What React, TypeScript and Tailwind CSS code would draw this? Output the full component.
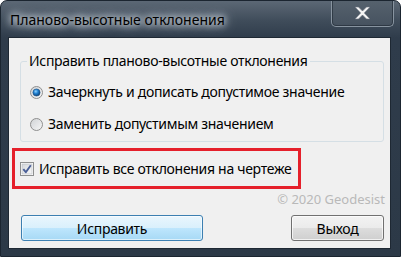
import React from "react";

const font = { fontFamily: '"Noto Sans", "Open Sans", sans-serif' };

function Radio({ checked }: { checked: boolean }) {
  return (
    <svg width="13" height="13" viewBox="0 0 13 13" className="shrink-0">
      <defs>
        <linearGradient id={checked ? "rg1" : "rg0"} x1="0" y1="0" x2="1" y2="1">
          <stop offset="0" stopColor="#cfd2d5" />
          <stop offset="1" stopColor="#f7f7f7" />
        </linearGradient>
        <radialGradient id="dot" cx="0.4" cy="0.35" r="0.7">
          <stop offset="0" stopColor="#8fd2ff" />
          <stop offset="0.45" stopColor="#1f7fcf" />
          <stop offset="1" stopColor="#0b3a6e" />
        </radialGradient>
      </defs>
      <circle cx="6.5" cy="6.5" r="6" fill={`url(#${checked ? "rg1" : "rg0"})`} stroke="#8f8f8f" strokeWidth="1" />
      {checked && <circle cx="6.5" cy="6.5" r="3.6" fill="url(#dot)" stroke="#1c4f82" strokeWidth="0.6" />}
    </svg>
  );
}

function Check() {
  return (
    <svg width="14" height="14" viewBox="0 0 14 14" className="shrink-0">
      <defs>
        <linearGradient id="cb" x1="0" y1="0" x2="1" y2="1">
          <stop offset="0" stopColor="#d3d6da" />
          <stop offset="1" stopColor="#f9f9f9" />
        </linearGradient>
      </defs>
      <rect x="0.5" y="0.5" width="13" height="13" fill="#ffffff" stroke="#8e8f8f" />
      <rect x="2" y="2" width="10" height="10" fill="url(#cb)" stroke="#b5bac0" strokeWidth="0.6" />
      <path d="M3.3 7.2 L5.8 10.2 L10.8 3.2" fill="none" stroke="#4a5f97" strokeWidth="1.9" strokeLinejoin="round" />
    </svg>
  );
}

export default function App() {
  return (
    <div
      className="relative w-[401px] h-[257px] rounded-t-[7px] border border-[#1b2530] bg-[linear-gradient(180deg,#5c6875_0px,#3f4c5a_20px,#2f3c4b_37px,#2c3947_257px)] flex flex-col overflow-hidden"
      style={font}
    >
      {/* title bar */}
      <div className="h-[36px] flex items-start shrink-0">
        <div className="pl-[9px] pt-[9px] text-[14px] leading-[20px] text-black whitespace-nowrap [text-shadow:0_0_6px_#e8eef4,0_0_10px_#dfe6ee,0_0_14px_#c8d2dc]">
          Планово-высотные отклонения
        </div>
        <div className="ml-auto mr-[6px] -mt-px w-[63px] h-[27px] rounded-b-[5px] border border-[#8894a0] border-t-0 flex items-center justify-center bg-[linear-gradient(180deg,#56626e,#46525f)] shadow-[inset_0_0_0_1px_rgba(30,40,50,0.6)]">
          <svg width="17" height="14" viewBox="0 0 17 14">
            <path d="M1 1 L4.5 1 L8.5 5 L12.5 1 L16 1 L10.3 7 L16 13 L12.5 13 L8.5 9 L4.5 13 L1 13 L6.7 7 Z" fill="#f4f4f4" stroke="#6b7480" strokeWidth="0.6" />
          </svg>
        </div>
      </div>

      {/* client area */}
      <div className="ml-[7px] mr-[10px] w-[383px] h-[212px] border border-[#1e2833] bg-[#f0f0f0] flex flex-col text-[14px] tracking-[-0.3px] text-black whitespace-nowrap">
        {/* group box */}
        <div className="relative mt-[23px] ml-[11px] w-[364px] h-[81px] rounded-[3px] border border-[#d5dfe5] flex flex-col">
          <div className="absolute -top-[11px] left-[6px] px-[2px] bg-[#f0f0f0] leading-[20px]">
            Исправить планово-высотные отклонения
          </div>
          <div className="flex items-center gap-[5px] mt-[20px] ml-[9px] leading-[20px]">
            <Radio checked />
            <span>Зачеркнуть и дописать допустимое значение</span>
          </div>
          <div className="flex items-center gap-[5px] mt-[12px] ml-[9px] leading-[20px]">
            <Radio checked={false} />
            <span>Заменить допустимым значением</span>
          </div>
        </div>

        {/* red highlight */}
        <div className="mt-[6px] ml-[3px] w-[289px] h-[41px] border-[3px] border-[#e5202b] flex items-center pl-[5px] gap-[5px] leading-[20px]">
          <Check />
          <span>Исправить все отклонения на чертеже</span>
        </div>

        <div className="mt-[1px] h-[18px] pr-[5px] text-right text-[13px] leading-[18px] tracking-normal text-[#b9b9b9]">
          © 2020 Geodesist
        </div>

        {/* buttons */}
        <div className="mt-[7px] flex items-center px-[12px]">
          <div className="w-[182px] h-[26px] rounded-[3px] border border-[#3c7fb1] flex items-center justify-center bg-[linear-gradient(180deg,#eaf6fd_0%,#d9f0fc_50%,#bee6fd_50%,#a7d9f5_100%)] shadow-[inset_0_0_0_1px_rgba(255,255,255,0.6)]">
            Исправить
          </div>
          <div className="ml-auto mr-[-6px] w-[93px] h-[26px] rounded-[3px] border border-[#707070] flex items-center justify-center bg-[linear-gradient(180deg,#f2f2f2_0%,#ebebeb_50%,#dddddd_50%,#cfcfcf_100%)] shadow-[inset_0_0_0_1px_rgba(255,255,255,0.7)]">
            Выход
          </div>
        </div>
      </div>
    </div>
  );
}
